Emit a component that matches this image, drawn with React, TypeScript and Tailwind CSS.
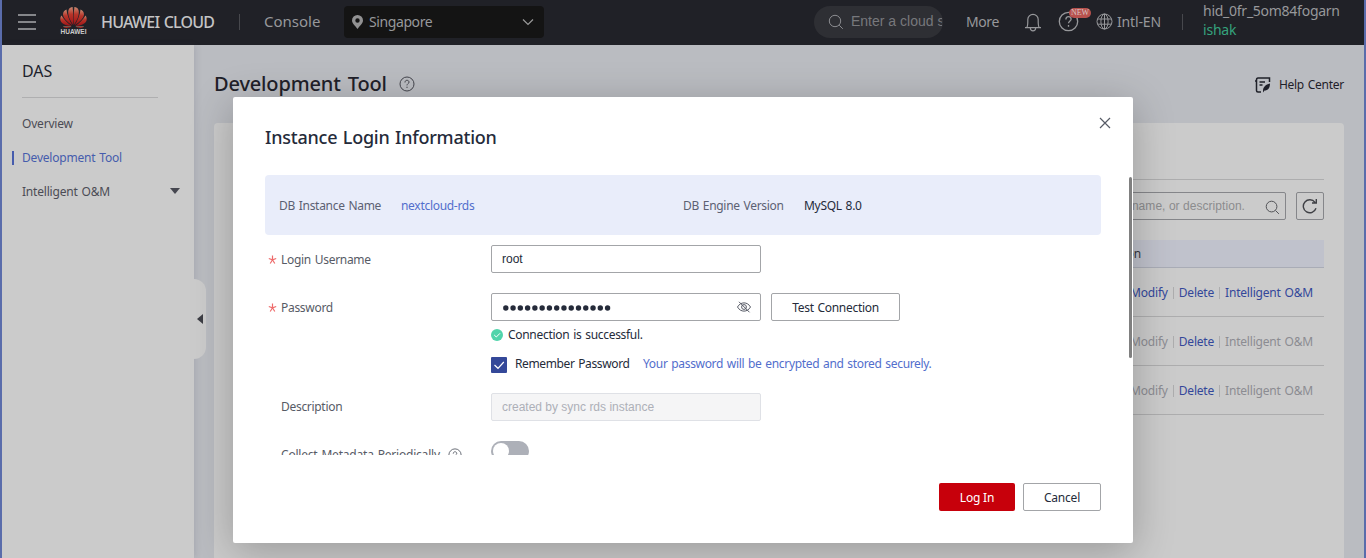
import React from "react";

type P = { children?: React.ReactNode; className?: string };

const Petals = () => (
  <svg width="27" height="21" viewBox="0 0 27 21" className="block">
    <defs>
      <linearGradient id="petal" x1="0" y1="0" x2="0" y2="1">
        <stop offset="0" stopColor="#c98a72" />
        <stop offset=".4" stopColor="#b8352a" />
        <stop offset="1" stopColor="#9b1216" />
      </linearGradient>
    </defs>
    <g fill="url(#petal)">
      <path d="M13.200 18C9.500 13 7.300 7 8.500 3 9.300.8 11 0 12.600 0 13.400 5 13.400 12 13.200 18Z" />
      <path d="M13.800 18C17.500 13 19.700 7 18.500 3 17.700.8 16 0 14.400 0 13.600 5 13.600 12 13.800 18Z" />
      <path d="M12.400 18.300C7 15 3.200 11 3 7.500 2.900 5 4.600 3.300 6.500 2.600 6.900 8 9.300 13.500 12.400 18.300Z" />
      <path d="M14.600 18.300C20 15 23.800 11 24 7.500 24.100 5 22.400 3.300 20.500 2.600 20.100 8 17.700 13.500 14.600 18.300Z" />
      <path d="M11.700 18.900C5.500 18.700 1.500 16.700.6 13.800-.1 11.800.5 9.800 1.500 8.600 4 12.800 7.500 16.500 11.700 18.900Z" />
      <path d="M15.300 18.900C21.500 18.700 25.500 16.700 26.400 13.800 27.100 11.800 26.500 9.800 25.500 8.600 23 12.800 19.500 16.500 15.300 18.900Z" />
      <path d="M11.500 19.500H3C4 21.200 8 21.600 11.500 19.500Z" />
      <path d="M15.500 19.500H24C23 21.200 19 21.600 15.500 19.500Z" />
    </g>
  </svg>
);

const Question = ({ className = "" }: P) => (
  <svg viewBox="0 0 16 16" className={className} fill="none" stroke="currentColor">
    <circle cx="8" cy="8" r="7" />
    <path d="M6 6.500C6 5 6.900 4.300 8 4.300S10 5 10 6.200C10 7.500 8 7.700 8 9.400M8 10.700V12" />
  </svg>
);

const Search = ({ className = "" }: P) => (
  <svg viewBox="0 0 16 16" className={className} fill="none" stroke="currentColor">
    <circle cx="7" cy="7" r="5.700" />
    <path d="M11.200 11.200 14.800 14.800" />
  </svg>
);

const Header = () => (
  <header className="flex h-[45px] shrink-0 items-center bg-[#202127] pb-[2px] text-[#97989b]">
    <div className="ml-4 flex h-4 w-[18px] flex-col justify-between">
      <i className="h-0.5 bg-[#85868a]" />
      <i className="h-0.5 bg-[#85868a]" />
      <i className="h-0.5 bg-[#85868a]" />
    </div>
    <div className="mt-[-1px] ml-6 flex w-[27px] flex-col items-center">
      <Petals />
      <span className="font-['Liberation_Sans'] text-[6.5px] leading-[8px] font-bold text-[#cbcbcb]">HUAWEI</span>
    </div>
    <span className="ml-[14px] w-[138px] text-[16px] font-medium tracking-[-0.8px] [word-spacing:1px] whitespace-nowrap text-[#c4c4c5]">HUAWEI CLOUD</span>
    <i className="h-4 w-px bg-[#47484d]" />
    <span className="ml-6 w-[80px] text-[15px]">Console</span>
    <div className="flex h-8 w-[200px] items-center rounded bg-[#141414] pr-[10px] pl-2">
      <svg width="11" height="14" viewBox="0 0 11 14">
        <path fillRule="evenodd" fill="#929293" d="M5.500 0A5.500 5.500 0 0 0 0 5.500C0 8.500 3 10.500 5.500 14 8 10.500 11 8.500 11 5.500A5.500 5.500 0 0 0 5.500 0ZM5.500 3.300A2.200 2.200 0 1 1 5.500 7.700 2.200 2.200 0 0 1 5.500 3.300Z" />
      </svg>
      <span className="mt-[-1px] ml-[6px] flex-1 text-[14px] tracking-[-0.4px]">Singapore</span>
      <svg width="12" height="8" viewBox="0 0 12 8" fill="none" stroke="#999" strokeWidth="1.2">
        <path d="M1 1.500 6 6.500 11 1.500" />
      </svg>
    </div>
    <div className="ml-[270px] flex h-8 w-[129px] items-center overflow-hidden rounded-full bg-[#2e2f34] pl-[14px] text-[#77787c]">
      <Search className="h-4 w-4 shrink-0 text-[#8b8c90]" />
      <span className="ml-[7px] w-[91px] overflow-hidden font-['Liberation_Sans'] text-[14px] whitespace-nowrap">Enter a cloud s</span>
    </div>
    <span className="mt-[-1px] ml-[23px] w-[58px] text-[14px] tracking-[-0.4px]">More</span>
    <svg width="18" height="20" viewBox="0 0 18 20" fill="none" stroke="currentColor" strokeWidth="1.2">
      <path d="M1 15.700H17M2.800 15.500C4 14 3.800 11 3.800 7.500A5.200 5.200 0 0 1 14.200 7.500C14.200 11 14 14 15.200 15.500M6.300 16C6.500 19.800 11.500 19.800 11.700 16" />
    </svg>
    <div className="relative ml-[16px]">
      <Question className="h-[21px] w-[21px]" />
      <span className="absolute top-[-3px] left-[11px] flex h-[10px] w-[22px] items-center justify-center rounded-full bg-[#b8524e] font-['Liberation_Serif'] text-[8px] leading-none text-[#d9c4c2]">NEW</span>
    </div>
    <svg width="17" height="17" viewBox="0 0 17 17" fill="none" stroke="currentColor" className="mt-[-1px] ml-[17px]">
      <circle cx="8.500" cy="8.500" r="7.500" />
      <ellipse cx="8.500" cy="8.500" rx="3.600" ry="7.500" />
      <path d="M8.500 1V16M1.500 6H15.500M1.500 11.200H15.500" />
    </svg>
    <span className="mt-[-1px] ml-[4px] w-[65px] text-[14px] tracking-[-0.15px] whitespace-nowrap">Intl-EN</span>
    <i className="h-4 w-px bg-[#47484d]" />
    <div className="mt-[-3px] ml-[20px] flex flex-col text-[14px] leading-[19px] whitespace-nowrap">
      <span className="tracking-[-0.26px]">hid_0fr_5om84fogarn</span>
      <span className="tracking-[-0.2px] text-[#35a37d]">ishak</span>
    </div>
  </header>
);

const Sidebar = () => (
  <aside className="relative w-48 shrink-0 bg-[#cbcbcb] px-5 pt-[15px] text-[12px] text-[#4b4c55] shadow-[2px_0_6px_rgba(60,60,80,0.12)]">
    <div className="text-[16px] leading-[22px] text-[#20222b]">DAS</div>
    <div className="mt-[15px] w-[136px] border-t border-[#afafb0]" />
    <nav className="mt-[17px] flex flex-col gap-4 leading-[18px] tracking-[-0.2px] [word-spacing:1px]">
      <span>Overview</span>
      <span className="relative text-[#465cad]">
        <i className="absolute top-[2px] left-[-10px] h-[14px] w-0.5 bg-[#465cad]" />
        Development Tool
      </span>
      <span className="flex items-center justify-between">
        Intelligent O&amp;M
        <svg width="10" height="6" viewBox="0 0 10 6" className="mt-[-2px] mr-[-6px]"><path d="M0 0H10L5 6Z" fill="#464750" /></svg>
      </span>
    </nav>
    <div className="absolute top-[234px] right-[-12px] flex h-20 w-3 items-center justify-center rounded-r-xl bg-[#cbcbcb]">
      <svg width="6" height="10"><path d="M6 0V10L0 5Z" fill="#3c3d44" /></svg>
    </div>
  </aside>
);

const Row = ({ enabled }: { enabled?: boolean }) => (
  <div className="flex h-[49px] items-center justify-end border-b border-[#adadae] pt-[2px] pr-[11px] text-[12px] tracking-[-0.2px] [word-spacing:1px] whitespace-nowrap">
    <span className={enabled ? "text-[#33479a]" : "text-[#8b8c92]"}>Modify</span>
    <i className="mx-[5px] h-3 w-px bg-[#adadae]" />
    <span className="text-[#33479a]">Delete</span>
    <i className="mx-[5px] h-3 w-px bg-[#adadae]" />
    <span className={enabled ? "text-[#33479a]" : "text-[#8b8c92]"}>Intelligent O&amp;M</span>
  </div>
);

const Page = () => (
  <main className="flex min-w-0 flex-1 flex-col px-5">
    <div className="mt-[24px] flex h-[30px] items-center text-[#1f2029]">
      <h1 className="text-[20px] font-medium tracking-[-0.15px] [word-spacing:2px]">Development Tool</h1>
      <Question className="ml-[12px] h-4 w-4 text-[#44454d]" />
      <svg width="16" height="16" viewBox="0 0 16 16" fill="none" stroke="currentColor" strokeWidth="1.5" className="mt-[1px] ml-auto">
        <path d="M14.500 5V1H3C1.500 1 1.500 2 1.500 3V13.500C1.500 14.500 2 15 3 15H6M0 4H2M4.500 5H10M4.500 8H7.500" />
        <path d="M8 14C8 10 10.500 7.500 15 6.500 15 11 13 13.500 9.500 13.500L8 15.500Z" fill="currentColor" stroke="none" />
      </svg>
      <span className="mt-[2px] ml-[8px] text-[12px] tracking-[-0.27px] [word-spacing:1px]">Help Center</span>
    </div>
    <section className="mt-[24px] flex-1 rounded-t bg-[#cbcbcb] px-5">
      <div className="h-[57px] border-b border-[#adadae]" />
      <div className="mt-[12px] flex justify-end gap-[10px] font-['Liberation_Sans'] text-[12px]">
        <div className="flex h-7 w-[300px] items-center justify-end rounded-[2px] border border-[#85868a] pr-[5px] text-[#8b8c8e]">
          <span className="tracking-[0.05px]">name, or description.</span>
          <Search className="mt-[2px] ml-[20px] h-[15px] w-[15px] text-[#4b4c50]" />
        </div>
        <div className="flex h-7 w-7 items-center justify-center rounded-[2px] border border-[#85868a]">
          <svg width="16" height="16" viewBox="0 0 16 16" fill="none" stroke="#3f4045" strokeWidth="1.400">
            <path d="M14 10.300A6.500 6.500 0 1 1 13 4.300M14.300 1V5H10" />
          </svg>
        </div>
      </div>
      <div className="mt-[20px] flex h-7 items-center border-b border-[#a9acb6] bg-[#c0c2cc] text-[12px] text-[#363740]">
        <span className="ml-[850px]">Operation</span>
      </div>
      <Row enabled />
      <Row />
      <Row />
    </section>
  </main>
);

const Label = ({ children, required }: P & { required?: boolean }) => (
  <div className={`flex w-[226px] shrink-0 items-center pl-[3px] text-[#575b66] ${required ? "pt-[2px]" : ""}`}>
    <span className="w-[13px] shrink-0">
      {required && (
        <svg width="10" height="10" viewBox="0 0 10 10" stroke="#ee6b6b" strokeWidth="1.200">
          <path d="M4.500 .5V5M.8 3.500 4.500 4.800 8.200 3.500M2.200 8.500 4.500 4.800 6.800 8.500" fill="none" />
        </svg>
      )}
    </span>
    {children}
  </div>
);

const Modal = () => (
  <div className="absolute top-[97px] left-[233px] flex h-[446px] w-[900px] flex-col rounded-[2px] bg-white text-[12px] tracking-[-0.3px] [word-spacing:1px] text-[#252b3a] shadow-[0_8px_40px_rgba(0,0,0,0.25)]">
    <div className="flex h-[78px] shrink-0 items-start justify-between pr-[22px] pl-8">
      <h2 className="mt-[28px] text-[18px] leading-[25px] font-medium tracking-[-0.22px]">Instance Login Information</h2>
      <svg width="12" height="12" viewBox="0 0 12 12" stroke="#575b66" strokeWidth="1.200" className="mt-[20px]">
        <path d="M1 1 11 11M11 1 1 11" />
      </svg>
    </div>
    <div className="relative h-[280px] shrink-0 overflow-hidden pr-8 pl-8">
      <div className="flex h-[60px] items-center rounded bg-[#e9edfa] pt-[2px] pl-[14px] text-[#5c6173]">
        <span className="w-[122px]">DB Instance Name</span>
        <span className="w-[282px] text-[#526ecc]">nextcloud-rds</span>
        <span className="w-[121px]">DB Engine Version</span>
        <span className="text-[#252b3a]">MySQL 8.0</span>
      </div>
      <div className="mt-[10px] flex h-7">
        <Label required>Login Username</Label>
        <div className="flex w-[270px] items-center rounded-[2px] border border-[#a3a5a8] pl-[10px] font-['Liberation_Sans'] tracking-normal">root</div>
      </div>
      <div className="mt-[20px] flex h-7">
        <Label required>Password</Label>
        <div className="flex w-[270px] items-center rounded-[2px] border border-[#a3a5a8] pr-[9px] pl-[11px]">
          <svg width="110" height="6" fill="#252b3a" className="mt-[1px]">
            {Array.from({ length: 15 }, (_, i) => (
              <circle key={i} cx={2.8 + i * 7.27} cy="3" r="2.700" />
            ))}
          </svg>
          <svg width="14" height="12" viewBox="0 0 14 12" fill="none" stroke="#575b66" className="ml-auto">
            <path d="M.5 6C3.500.5 10.500.5 13.500 6 10.500 11.500 3.500 11.500.5 6ZM2 .8 12.500 11.300" />
            <circle cx="7" cy="6" r="2.400" />
          </svg>
        </div>
        <div className="ml-[10px] flex w-[129px] items-center justify-center rounded-[2px] border border-[#a3a5a8] pt-[2px]">Test Connection</div>
      </div>
      <div className="mt-[5px] ml-[226px] flex h-[18px] items-center">
        <svg width="12" height="12" viewBox="0 0 12 12">
          <circle cx="6" cy="6" r="6" fill="#50d4ab" />
          <path d="M3.200 6 5.300 8 9 4.300" stroke="#fff" fill="none" />
        </svg>
        <span className="ml-[5px]">Connection is successful.</span>
      </div>
      <div className="mt-[11px] ml-[226px] flex h-[20px] items-center">
        <svg width="16" height="16" viewBox="0 0 16 16">
          <rect width="16" height="16" rx="1" fill="#344899" />
          <path d="M3.500 8 7 11.300 12.800 5" stroke="#fff" fill="none" strokeWidth="1.200" />
        </svg>
        <span className="mt-[-2px] ml-[8px] w-[128px] tracking-[-0.38px]">Remember Password</span>
        <span className="mt-[-2px] tracking-[-0.33px] text-[#526ecc]">Your password will be encrypted and stored securely.</span>
      </div>
      <div className="mt-[18px] flex h-7">
        <Label>Description</Label>
        <div className="flex w-[270px] items-center rounded-[2px] border border-[#dfe1e6] bg-[#f5f5f6] pl-[10px] font-['Liberation_Sans'] tracking-normal [word-spacing:0px] text-[#adb0b8]">created by sync rds instance</div>
      </div>
      <div className="mt-[20px] flex h-7">
        <Label>
          <span className="tracking-[-0.2px]">Collect Metadata Periodically</span>
          <Question className="ml-[8px] h-[14px] w-[14px]" />
        </Label>
        <div className="flex h-5 w-[38px] items-center rounded-full bg-[#adb0b8] pl-0.5">
          <i className="h-4 w-4 rounded-full bg-white" />
        </div>
      </div>
    </div>
    <i className="absolute top-[80px] right-[1px] h-[181px] w-[3px] rounded-full bg-[#808080]" />
    <div className="mt-[28px] flex justify-end gap-2 pr-8">
      <button className="h-7 w-[76px] rounded-[2px] bg-[#c7000b] pt-[2px] tracking-[-0.2px] text-white">Log In</button>
      <button className="h-7 w-[78px] rounded-[2px] border border-[#a3a5a8] pt-[2px] tracking-[-0.2px]">Cancel</button>
    </div>
  </div>
);

export default function App() {
  return (
    <div className="relative flex h-[558px] w-[1366px] flex-col overflow-hidden border-x-2 border-[#5a6cab] bg-[#babcc1] font-['Noto_Sans',sans-serif]">
      <Header />
      <div className="flex flex-1">
        <Sidebar />
        <Page />
      </div>
      <div className="absolute inset-y-0 left-[-2px]">
        <Modal />
      </div>
    </div>
  );
}
